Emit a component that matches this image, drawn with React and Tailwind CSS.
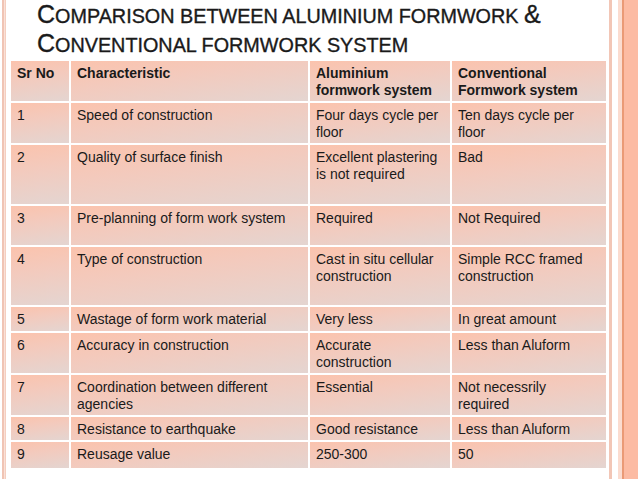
import React from 'react';

const rows = [
  ['1', 'Speed of construction', 'Four days cycle per floor', 'Ten days cycle per floor'],
  ['2', 'Quality of surface finish', 'Excellent plastering is not required', 'Bad'],
  ['3', 'Pre-planning of form work system', 'Required', 'Not Required'],
  ['4', 'Type of construction', 'Cast in situ cellular construction', 'Simple RCC framed construction'],
  ['5', 'Wastage of form work material', 'Very less', 'In great amount'],
  ['6', 'Accuracy in construction', 'Accurate construction', 'Less than Aluform'],
  ['7', 'Coordination between different agencies', 'Essential', 'Not necessrily required'],
  ['8', 'Resistance to earthquake', 'Good resistance', 'Less than Aluform'],
  ['9', 'Reusage value', '250-300', '50'],
];

const headers = ['Sr No', 'Characteristic', 'Aluminium formwork system', 'Conventional Formwork system'];

function Cell({ children, bold }) {
  return (
    <div
      className={`pl-[6px] pr-[8px] pt-[4px] text-[14px] leading-[17px] text-[#1a1a1a] bg-[linear-gradient(172deg,#fbc3ad_0%,#f3cabd_40%,#e4d5d1_100%)] ${bold ? 'font-bold' : ''}`}
    >
      {children}
    </div>
  );
}

export default function App() {
  return (
    <div className="w-[638px] h-[479px] bg-white flex overflow-hidden font-['Liberation_Sans',Arial,sans-serif]">
      {/* left frame lines */}
      <div className="w-[11px] shrink-0 flex">
        <div className="w-[2px]" />
        <div className="w-[2px] bg-[#f0c4b4]" />
        <div className="w-[1px] bg-[#fae1d7]" />
        <div className="w-[1px] bg-[#f4cec0]" />
      </div>

      <div className="w-[595px] shrink-0 flex flex-col">
        <h1 className="pl-[26px] pt-[1px] text-[19.8px] leading-[27px] font-normal text-[#1a1a1a] whitespace-nowrap [-webkit-text-stroke:0.35px_#1a1a1a]">
          <div>
            <span className="text-[25px]">C</span>OMPARISON BETWEEN ALUMINIUM FORMWORK <span className="text-[25px]">&amp;</span>
          </div>
          <div>
            <span className="text-[25px]">C</span>ONVENTIONAL FORMWORK SYSTEM
          </div>
        </h1>

        <div className="mt-[2px] grid grid-cols-[58px_237px_140px_154px] grid-rows-[40px_40px_59px_39px_58px_24px_40px_40px_23px_26px] gap-[2px]">
          {headers.map((h) => (
            <Cell key={h} bold>{h}</Cell>
          ))}
          {rows.map((r) =>
            r.map((c, i) => <Cell key={r[0] + '-' + i}>{c}</Cell>)
          )}
        </div>
      </div>

      {/* right frame */}
      <div className="flex-1 flex">
        <div className="w-[3px]" />
        <div className="w-[3px] bg-[#f2c6b6]" />
        <div className="w-[6px]" />
        <div className="w-[4px] bg-[#fbdcd0]" />
        <div className="w-[2px] bg-[#ea9a76]" />
        <div className="flex-1 bg-[#fcbba3]" />
      </div>
    </div>
  );
}
